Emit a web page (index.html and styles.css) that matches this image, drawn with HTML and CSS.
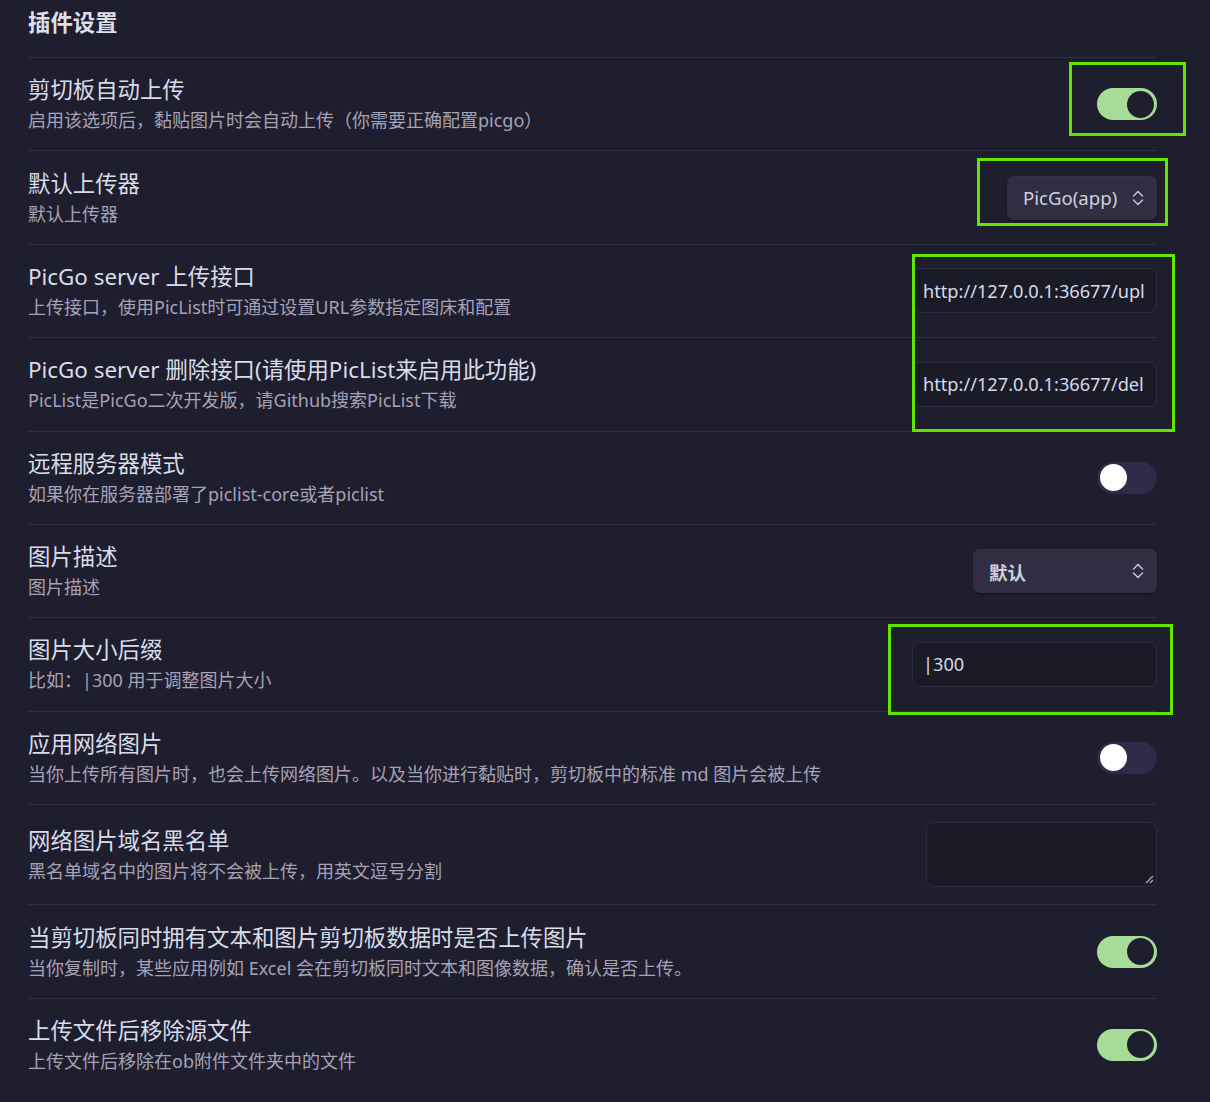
FILE: index.html
```html
<!DOCTYPE html>
<html lang="zh">
<head>
<meta charset="utf-8">
<title>插件设置</title>
<link rel="stylesheet" href="styles.css">
</head>
<body>
<div class="settings">
  <div class="heading"><div class="heading-name">插件设置</div></div>

  <div class="item">
    <div class="info">
      <div class="name">剪切板自动上传</div>
      <div class="desc">启用该选项后，黏贴图片时会自动上传（你需要正确配置picgo）</div>
    </div>
    <div class="control"><div class="toggle on"><span class="knob"></span></div></div>
  </div>

  <div class="item">
    <div class="info">
      <div class="name">默认上传器</div>
      <div class="desc">默认上传器</div>
    </div>
    <div class="control">
      <div class="select select-picgo"><span>PicGo(app)</span>
        <svg class="chev" viewBox="0 0 12 16" width="12" height="16"><path d="M1.5 6l4.5-4.5 4.5 4.5M1.5 10l4.5 4.5 4.5-4.5"/></svg>
      </div>
    </div>
  </div>

  <div class="item">
    <div class="info">
      <div class="name">PicGo server 上传接口</div>
      <div class="desc">上传接口，使用PicList时可通过设置URL参数指定图床和配置</div>
    </div>
    <div class="control"><input class="input" type="text" value="http://127.0.0.1:36677/upload"></div>
  </div>

  <div class="item">
    <div class="info">
      <div class="name">PicGo server 删除接口(请使用PicList来启用此功能)</div>
      <div class="desc">PicList是PicGo二次开发版，请Github搜索PicList下载</div>
    </div>
    <div class="control"><input class="input" type="text" value="http://127.0.0.1:36677/delete"></div>
  </div>

  <div class="item">
    <div class="info">
      <div class="name">远程服务器模式</div>
      <div class="desc">如果你在服务器部署了piclist-core或者piclist</div>
    </div>
    <div class="control"><div class="toggle"><span class="knob"></span></div></div>
  </div>

  <div class="item">
    <div class="info">
      <div class="name">图片描述</div>
      <div class="desc">图片描述</div>
    </div>
    <div class="control">
      <div class="select select-default"><span>默认</span>
        <svg class="chev" viewBox="0 0 12 16" width="12" height="16"><path d="M1.5 6l4.5-4.5 4.5 4.5M1.5 10l4.5 4.5 4.5-4.5"/></svg>
      </div>
    </div>
  </div>

  <div class="item">
    <div class="info">
      <div class="name">图片大小后缀</div>
      <div class="desc">比如：|300 用于调整图片大小</div>
    </div>
    <div class="control"><input class="input" type="text" value="|300"></div>
  </div>

  <div class="item">
    <div class="info">
      <div class="name">应用网络图片</div>
      <div class="desc">当你上传所有图片时，也会上传网络图片。以及当你进行黏贴时，剪切板中的标准 md 图片会被上传</div>
    </div>
    <div class="control"><div class="toggle"><span class="knob"></span></div></div>
  </div>

  <div class="item">
    <div class="info">
      <div class="name">网络图片域名黑名单</div>
      <div class="desc">黑名单域名中的图片将不会被上传，用英文逗号分割</div>
    </div>
    <div class="control">
      <div class="textarea">
        <svg class="grip" viewBox="0 0 10 10" width="10" height="10"><path d="M9 2L2 9M9 6L6 9"/></svg>
      </div>
    </div>
  </div>

  <div class="item">
    <div class="info">
      <div class="name">当剪切板同时拥有文本和图片剪切板数据时是否上传图片</div>
      <div class="desc">当你复制时，某些应用例如 Excel 会在剪切板同时文本和图像数据，确认是否上传。</div>
    </div>
    <div class="control"><div class="toggle on"><span class="knob"></span></div></div>
  </div>

  <div class="item">
    <div class="info">
      <div class="name">上传文件后移除源文件</div>
      <div class="desc">上传文件后移除在ob附件文件夹中的文件</div>
    </div>
    <div class="control"><div class="toggle on"><span class="knob"></span></div></div>
  </div>
</div>

<div class="mark mark-1"></div>
<div class="mark mark-2"></div>
<div class="mark mark-3"></div>
<div class="mark mark-4"></div>
</body>
</html>
```

FILE: styles.css
```css
html, body {
  margin: 0;
  padding: 0;
  background: #1e1e2e;
}
body {
  position: relative;
  font-family: "Noto Sans", "Noto Sans CJK SC", sans-serif;
  color: #d9dcea;
  min-height: 1102px;
}
.settings {
  padding: 0 53px 0 28px;
}
.heading {
  padding: 8px 0 20px;
  border-bottom: 1px solid #2f2e42;
}
.heading-name {
  font-size: 22.4px;
  line-height: 29px;
  font-weight: 700;
  color: #dcdfea;
}
.item {
  display: flex;
  align-items: center;
  padding: 17.2px 0;
  border-top: 1px solid #2f2e42;
}
.heading + .item { border-top: none; }
.info {
  flex: 1;
  min-width: 0;
}
.name {
  font-size: 22.4px;
  line-height: 29px;
  color: #d9dcea;
  white-space: nowrap;
}
.desc {
  margin-top: 4px;
  font-size: 18px;
  line-height: 25px;
  color: #a7a2b6;
  white-space: nowrap;
}
.control {
  display: flex;
  justify-content: flex-end;
  align-items: center;
  flex: none;
}
.toggle {
  position: relative;
  width: 60px;
  height: 32px;
  border-radius: 16px;
  background: #2f2b49;
}
.toggle .knob {
  position: absolute;
  top: 2.5px;
  left: 3px;
  width: 27px;
  height: 27px;
  border-radius: 50%;
  background: #ffffff;
}
.toggle.on { background: #a6dc98; }
.toggle.on .knob {
  left: auto;
  right: 3px;
  background: #1e1e2e;
}
.select {
  display: flex;
  align-items: center;
  justify-content: space-between;
  height: 44px;
  box-sizing: border-box;
  padding: 0 13px 0 16px;
  border-radius: 7px;
  background: #312e43;
  box-shadow: 0 1px 2px rgba(0, 0, 0, 0.45), inset 0 1px 0 rgba(255, 255, 255, 0.03);
  font-size: 18.6px;
  color: #cfd0de;
}
.select-picgo { width: 150px; }
.select-default { width: 184px; }
.select-default span { font-weight: 600; }
.chev {
  fill: none;
  stroke: #c3c3d3;
  stroke-width: 1.5;
  stroke-linecap: round;
  stroke-linejoin: round;
}
.input {
  width: 245px;
  height: 45px;
  box-sizing: border-box;
  margin: 0;
  padding: 0 12px 0 10px;
  border: 1px solid #2d2c40;
  border-radius: 8px;
  background: #1b1b28;
  outline: none;
  font-family: "Noto Sans", "Noto Sans CJK SC", sans-serif;
  font-size: 18.2px;
  color: #d6d9e8;
}
.textarea {
  position: relative;
  width: 231px;
  height: 65px;
  box-sizing: border-box;
  border: 1px solid #2d2c40;
  border-radius: 8px;
  background: #1b1b28;
}
.grip {
  position: absolute;
  right: 2px;
  bottom: 2px;
  fill: none;
  stroke: #9a9aa6;
  stroke-width: 1.6;
}
.mark {
  position: absolute;
  border: 3px solid #62e600;
  box-sizing: border-box;
  pointer-events: none;
}
.mark-1 { left: 1069px; top: 62px; width: 117px; height: 74px; }
.mark-2 { left: 977px; top: 158px; width: 191px; height: 68px; }
.mark-3 { left: 912px; top: 254px; width: 263px; height: 178px; }
.mark-4 { left: 888px; top: 624px; width: 285px; height: 91px; }
```
